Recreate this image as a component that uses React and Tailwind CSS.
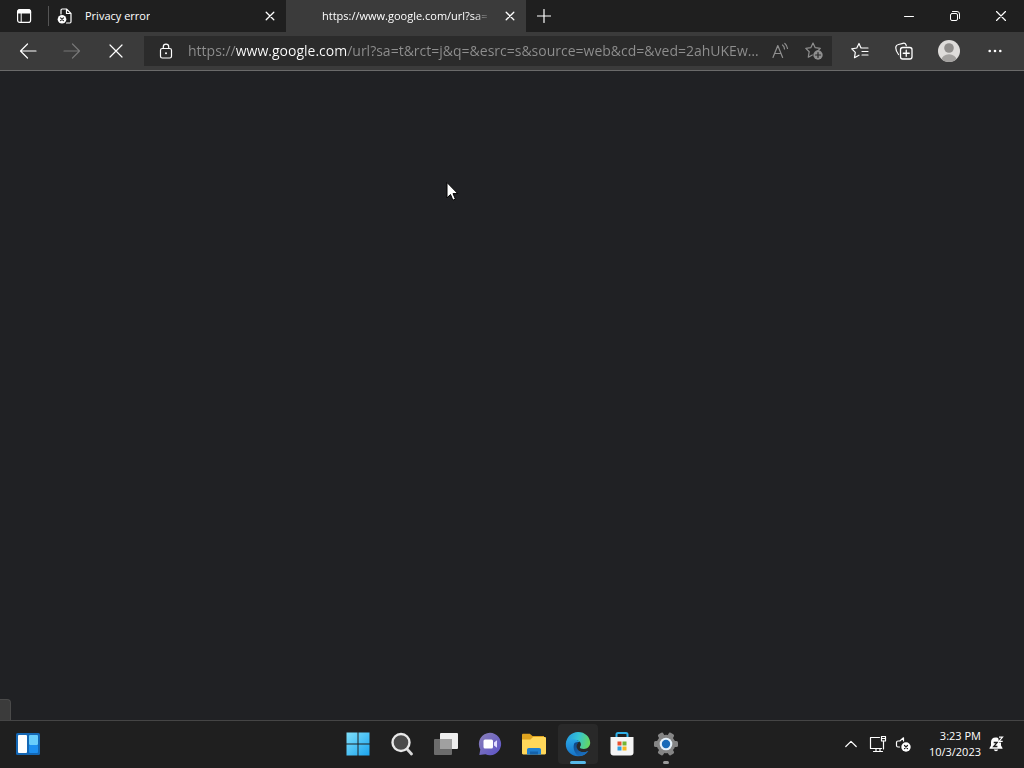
function Icon({ size = 16, children, className = '' }) {
    return (
        <svg
            width={size}
            height={size}
            viewBox={`0 0 ${size} ${size}`}
            fill="none"
            stroke="currentColor"
            strokeLinecap="round"
            strokeLinejoin="round"
            className={`shrink-0 ${className}`}
            aria-hidden="true"
        >
            {children}
        </svg>
    );
}

function CloseIcon() {
    return (
        <Icon size={10}>
            <path d="M1.200 1.200l7.600 7.600M8.800 1.200l-7.600 7.600" strokeWidth="1.300" />
        </Icon>
    );
}

function ErrorPageIcon() {
    return (
        <Icon>
            <path d="M4 6V2.200C4 1.300 4.500 1 5.200 1H9.500l4.500 4.500v8.300c0 .8-.4 1.200-1.200 1.200H9.500M9.500 1v4.500H14" strokeWidth="1.200" />
            <circle cx="5" cy="11.200" r="4.300" fill="currentColor" stroke="none" />
            <path d="M3.600 9.800l2.800 2.800M6.400 9.800l-2.800 2.800" stroke="#1f1f1f" strokeWidth="1.200" />
        </Icon>
    );
}

function TitleBar() {
    return (
        <header className="flex h-8 items-stretch bg-[#1f1f1f] text-white">
            <button aria-label="Tab actions" className="flex w-12 items-center justify-center">
                <Icon>
                    <rect x="1.600" y="1.600" width="13" height="12.800" rx="2.200" strokeWidth="1.200" />
                    <path d="M1.600 3.800c0-1.400.8-2.200 2.200-2.200h8.600c1.400 0 2.200.8 2.200 2.200v1.200h-13z" fill="currentColor" strokeWidth="1" />
                    <path d="M5.200 5v9.400" strokeWidth="1" />
                </Icon>
            </button>
            <nav aria-label="Tabs" className="flex min-w-0">
                <div className="flex w-[238px] min-w-0 items-center">
                    <span className="h-5 w-px shrink-0 bg-[#555555]" />
                    <button className="flex h-full min-w-0 flex-1 items-center gap-3 pl-2 text-left text-[11px]">
                        <ErrorPageIcon />
                        <span className="truncate">Privacy error</span>
                    </button>
                    <button aria-label="Close tab" className="flex h-full w-8 items-center justify-center">
                        <CloseIcon />
                    </button>
                </div>
                <div className="flex w-60 min-w-0 items-center bg-[#3b3b3b]">
                    <button className="h-full min-w-0 flex-1 pl-9 text-left text-[11px]">
                        <span className="block whitespace-nowrap mask-r-from-88% mask-r-to-100%">
                            https://www.google.com/url?sa=
                        </span>
                    </button>
                    <button aria-label="Close tab" className="flex h-full w-8 items-center justify-center">
                        <CloseIcon />
                    </button>
                </div>
            </nav>
            <button aria-label="New tab" className="flex w-9 items-center justify-center">
                <Icon size={14}>
                    <path d="M7 .5v13M.5 7h13" strokeWidth="1.200" />
                </Icon>
            </button>
            <div className="ml-auto flex">
                <button aria-label="Minimize" className="flex w-[46px] items-center justify-center">
                    <Icon size={10}>
                        <path d="M.5 5.500h9" />
                    </Icon>
                </button>
                <button aria-label="Restore" className="flex w-[46px] items-center justify-center">
                    <Icon size={10}>
                        <rect x=".5" y="2.500" width="7" height="7" rx="1.500" />
                        <path d="M2.500.5H7A2.500 2.500 0 0 1 9.500 3v4.500" />
                    </Icon>
                </button>
                <button aria-label="Close" className="flex w-[46px] items-center justify-center">
                    <Icon size={10}>
                        <path d="M.5.500l9 9M9.500.500l-9 9" strokeWidth="1.200" />
                    </Icon>
                </button>
            </div>
        </header>
    );
}

function ToolButton({ label, className = 'w-11', children, ...rest }) {
    return (
        <button aria-label={label} className={`flex items-center justify-center ${className}`} {...rest}>
            {children}
        </button>
    );
}

function Toolbar() {
    return (
        <div className="flex h-[39px] items-stretch border-b border-[#6a6a6a] bg-[#3b3b3b] px-[6px] text-white">
            <ToolButton label="Back">
                <Icon size={18}>
                    <path d="M17 9H1.500M8.500 2L1.500 9l7 7" strokeWidth="1.200" />
                </Icon>
            </ToolButton>
            <ToolButton label="Forward" className="w-11 text-[#777777]" disabled>
                <Icon size={18}>
                    <path d="M1 9h15.500M9.500 2l7 7-7 7" strokeWidth="1.200" />
                </Icon>
            </ToolButton>
            <ToolButton label="Stop loading">
                <Icon size={14}>
                    <path d="M1 1l12 12M13 1L1 13" strokeWidth="1.200" />
                </Icon>
            </ToolButton>

            <div className="my-1 mx-[6px] flex min-w-0 flex-1 items-stretch bg-[#2b2b2b]">
                <ToolButton label="View site information">
                    <Icon>
                        <rect x="2.500" y="5.500" width="11" height="9.500" rx="1.800" strokeWidth="1.200" />
                        <path d="M5.300 5.500V3.800a2.700 2.700 0 0 1 5.400 0v1.700" strokeWidth="1.200" />
                        <circle cx="8" cy="10.200" r="1" fill="currentColor" stroke="none" />
                    </Icon>
                </ToolButton>
                <input
                    type="text"
                    aria-label="Address and search bar"
                    defaultValue="https://www.google.com/url?sa=t&rct=j&q=&esrc=s&source=web&cd=&ved=2ahUKEwGmMpGh"
                    className="min-w-0 flex-1 overflow-hidden bg-[linear-gradient(90deg,#8f8f8f_48px,#ffffff_48px,#ffffff_159px,#8f8f8f_159px)] bg-clip-text text-sm text-ellipsis text-transparent caret-white outline-none"
                />
                <div className="flex text-[#8f8f8f]">
                    <ToolButton label="Read aloud" className="w-8">
                        <Icon size={18}>
                            <path d="M2 15.500L6.800 3.500l4.800 12M3.700 11.500h6.200M11.500 3a5 5 0 0 1 2 4M13.800 1.500a7.500 7.500 0 0 1 2.700 5" strokeWidth="1.200" />
                        </Icon>
                    </ToolButton>
                    <ToolButton label="Add this page to favorites" className="w-9">
                        <Icon size={18}>
                            <path d="M8 1l2.200 4.700 5.100.7-3.400 3.300M7.300 13l-4 2.200.9-5.500L.8 6.400l5-.7L8 1" strokeWidth="1.200" />
                            <circle cx="13" cy="13" r="4.700" fill="currentColor" stroke="none" />
                            <path d="M13 10.500v5M10.500 13h5" stroke="#2b2b2b" strokeWidth="1.200" />
                        </Icon>
                    </ToolButton>
                </div>
            </div>

            <ToolButton label="Favorites">
                <Icon size={18}>
                    <path d="M10.500 6H17M11 9.500h6M11 13h6M8 13.200l-4.500 2.500.8-5.300L.8 6.800l5-.8L8 1.500l2 4.500" strokeWidth="1.200" />
                </Icon>
            </ToolButton>
            <ToolButton label="Collections">
                <Icon size={18}>
                    <path d="M3.500 12.500C1.500 10 .5 6.500 1 4.500c.3-1.300 1.300-1.700 2.500-2L8 1.300c1.500-.3 2.500.2 3 1.500l.3 1" strokeWidth="1.200" />
                    <rect x="5.500" y="5.500" width="11.500" height="11.500" rx="2.200" strokeWidth="1.300" />
                    <path d="M11.250 8.250v6M8.250 11.250h6" strokeWidth="1.300" />
                </Icon>
            </ToolButton>
            <ToolButton label="Profile" className="w-[46px]">
                <svg width="22" height="22" viewBox="0 0 22 22" aria-hidden="true">
                    <clipPath id="avatar">
                        <circle cx="11" cy="11" r="11" />
                    </clipPath>
                    <g clipPath="url(#avatar)">
                        <rect width="22" height="22" fill="#dedcda" />
                        <circle cx="11" cy="8" r="4.800" fill="#8f8d8b" />
                        <ellipse cx="11" cy="20" rx="7.500" ry="5.800" fill="#a3a19f" />
                    </g>
                </svg>
            </ToolButton>
            <ToolButton label="Settings and more" className="w-[46px]">
                <Icon size={14}>
                    <g fill="currentColor" stroke="none">
                        <circle cx="1.700" cy="7" r="1.300" />
                        <circle cx="7" cy="7" r="1.300" />
                        <circle cx="12.300" cy="7" r="1.300" />
                    </g>
                </Icon>
            </ToolButton>
        </div>
    );
}

const apps = [
    {
        name: 'Start',
        icon: (
            <svg width="24" height="24" viewBox="0 0 24 24">
                <linearGradient id="start" x1="0" y1="0" x2="1" y2="1">
                    <stop offset="0" stopColor="#7fe0fb" />
                    <stop offset="1" stopColor="#1ba4ee" />
                </linearGradient>
                <path fill="url(#start)" d="M.5.500h11v11H.5zM12.500.500h11v11h-11zM.5 12.500h11v11H.5zM12.500 12.500h11v11h-11z" />
            </svg>
        )
    },
    {
        name: 'Search',
        icon: (
            <svg width="24" height="24" viewBox="0 0 24 24">
                <path d="M17 17l4.500 5" stroke="#d8d8d8" strokeWidth="2.800" strokeLinecap="round" />
                <circle cx="11" cy="10.500" r="8.500" fill="#4a4a4a" stroke="#e8e8e8" strokeWidth="2.400" />
            </svg>
        )
    },
    {
        name: 'Task View',
        icon: (
            <svg width="24" height="24" viewBox="0 0 24 24">
                <rect x="6" y="1" width="18" height="16" rx="1" fill="#eeeeee" />
                <rect x="0" y="7" width="18" height="16" rx="1" fill="#6c6c6c" />
                <rect x="6" y="7" width="12" height="10" fill="#a0a0a0" />
            </svg>
        )
    },
    {
        name: 'Chat',
        icon: (
            <svg width="24" height="24" viewBox="0 0 24 24">
                <linearGradient id="chat" x1="0" y1="0" x2="1" y2="1">
                    <stop offset="0" stopColor="#8a80b8" />
                    <stop offset="1" stopColor="#5b52c8" />
                </linearGradient>
                <path d="M12 .8A11.200 11.200 0 1 1 7.500 22.300L1.300 23l1-5.500A11.200 11.200 0 0 1 12 .8z" fill="url(#chat)" />
                <rect x="5.500" y="7.500" width="9.500" height="9" rx="1.500" fill="#ffffff" />
                <path d="M16 10.500l3-2.300v7.600l-3-2.300z" fill="#e2dfff" />
            </svg>
        )
    },
    {
        name: 'File Explorer',
        icon: (
            <svg width="26" height="24" viewBox="0 0 26 24">
                <path d="M1 3c0-.8.500-1.300 1.300-1.300h6.500L11.500 4H23v7H1z" fill="#dfa31f" />
                <path d="M1 7.500h8.500L12 5h11.700c.8 0 1.300.5 1.300 1.300v15c0 .7-.5 1.200-1.200 1.200H2.200c-.7 0-1.200-.5-1.200-1.200z" fill="#ffd75a" />
                <path d="M6 22.500V17.800c0-1.100.7-1.800 1.800-1.800h10.400c1.100 0 1.800.7 1.800 1.800v4.700z" fill="#1f7fd0" />
                <path d="M9 22.500v-3h8v3z" fill="#1462ab" />
            </svg>
        )
    },
    {
        name: 'Microsoft Edge',
        active: true,
        icon: (
            <svg width="26" height="26" viewBox="0 0 26 26">
                <linearGradient id="edgeTop" x1="0" y1=".3" x2="1" y2=".5">
                    <stop offset="0" stopColor="#2398e2" />
                    <stop offset=".5" stopColor="#35c4d2" />
                    <stop offset="1" stopColor="#65d95f" />
                </linearGradient>
                <linearGradient id="edgeBase" x1="0" y1="0" x2="0" y2="1">
                    <stop offset="0" stopColor="#2aa5e5" />
                    <stop offset="1" stopColor="#1673c8" />
                </linearGradient>
                <linearGradient id="edgeWave" x1="0" y1="0" x2=".6" y2="1">
                    <stop offset="0" stopColor="#0f4480" />
                    <stop offset="1" stopColor="#1a70c0" />
                </linearGradient>
                <path d="M.8 12.500C1.500 6 6.500 1 13 1c7 0 12.200 5 12.200 10.800 0 3.700-2.900 6.200-6.300 6.200-2.600 0-4-.8-4-1.700 0-.7 1-1.200 1-3 0-2.300-2.100-4.100-5.200-4.100C6 9.200 2.300 11 .8 12.500z" fill="url(#edgeTop)" />
                <path d="M.8 13c.5-3.700 4-5.200 8-4.700 3.500.4 5.200 1.700 6.200 3-2.500-.8-4.500 1.200-4.500 3.700 0 4 4 6.500 8 6.300 2 0 3.700-.8 4.800-1.300C21 23.500 17.300 25.200 13 25.200 6 25.200.6 19.500.8 13z" fill="url(#edgeBase)" />
                <path d="M9.500 12c-1.800 3.300-1 9.500 4 13.100 4.300.1 7.800-2.100 9.800-5.100-4.200 2.300-8.500 1.200-10.600-1.500-1.700-2-1.700-5 .8-7-1.500-.6-3-.4-4 .5z" fill="url(#edgeWave)" />
            </svg>
        )
    },
    {
        name: 'Microsoft Store',
        icon: (
            <svg width="26" height="26" viewBox="0 0 26 26">
                <path d="M7.500 7V3.500C7.500 2.500 8 2 9 2h8c1 0 1.500.5 1.500 1.500V7" fill="none" stroke="#2fb0e8" strokeWidth="2" />
                <path d="M1.500 6h23v15.500c0 2-1 3-3 3h-17c-2 0-3-1-3-3z" fill="#f5f5f5" />
                <path d="M8.500 10.500h4v4h-4z" fill="#e8502e" />
                <path d="M13.500 10.500h4v4h-4z" fill="#72b532" />
                <path d="M8.500 15.500h4v4h-4z" fill="#2d9fe0" />
                <path d="M13.500 15.500h4v4h-4z" fill="#f5b81f" />
            </svg>
        )
    },
    {
        name: 'Settings',
        running: true,
        icon: (
            <svg width="26" height="26" viewBox="0 0 26 26">
                <g fill="#858585">
                    <circle cx="13" cy="13" r="9.300" />
                    <rect x="10" y="1" width="6" height="24" rx="1.500" transform="rotate(30 13 13)" />
                    <rect x="10" y="1" width="6" height="24" rx="1.500" transform="rotate(90 13 13)" />
                    <rect x="10" y="1" width="6" height="24" rx="1.500" transform="rotate(150 13 13)" />
                </g>
                <circle cx="13" cy="13" r="6.300" fill="#e6f1fa" />
                <circle cx="13" cy="13" r="4.200" fill="#1869b8" />
            </svg>
        )
    }
];

function Taskbar() {
    return (
        <footer className="grid h-12 grid-cols-[1fr_auto_1fr] items-stretch border-t border-[#454545] bg-[#1f1f1f] pb-px text-white">
            <button aria-label="Widgets" className="flex w-14 items-center justify-center">
                <svg width="24" height="22" viewBox="0 0 24 22" aria-hidden="true">
                    <rect width="24" height="22" rx="1.500" fill="#1467b4" />
                    <rect x="2" y="2" width="9" height="18" rx="1" fill="#ffffff" />
                    <rect x="13" y="2" width="9" height="10" rx="1" fill="#69cdfb" />
                    <rect x="13" y="12" width="9" height="8" rx="1" fill="#1d8ff0" />
                </svg>
            </button>

            <nav aria-label="Apps" className="flex items-center">
                {apps.map((app) => (
                    <div key={app.name} className="flex w-11 justify-center">
                        <button
                            aria-label={app.name}
                            className={`relative flex size-10 items-center justify-center rounded ${app.active ? 'bg-[#292929]' : ''}`}
                        >
                            {app.icon}
                            {app.active && <span className="absolute bottom-0 h-[3px] w-4 rounded-full bg-[#55b8e8]" />}
                            {app.running && <span className="absolute bottom-0 h-[3px] w-[6px] rounded-full bg-[#9a9a9a]" />}
                        </button>
                    </div>
                ))}
            </nav>

            <div className="flex items-center justify-end pr-5">
                <button aria-label="Show hidden icons" className="flex h-full w-7 items-center justify-center">
                    <Icon size={12}>
                        <path d="M.8 8.500L6 3.300l5.200 5.200" strokeWidth="1.200" />
                    </Icon>
                </button>
                <button aria-label="Network and volume" className="flex h-full items-center gap-2 px-1">
                    <Icon size={18}>
                        <path d="M10.500 2.500H1.500v11h11M4.500 16.500h9M7 13.500v3M11 13.500v3" strokeWidth="1.200" />
                        <rect x="12.500" y="1.500" width="4" height="4.500" strokeWidth="1.200" />
                        <path d="M12.500 3.500h4M14.500 6v8" strokeWidth="1.200" />
                    </Icon>
                    <Icon>
                        <path d="M8.500 5V1.800L4.800 5H3C2 5 1.500 5.500 1.500 6.500v3C1.500 10.500 2 11 3 11h1.500" strokeWidth="1.200" />
                        <circle cx="11" cy="11" r="4.700" fill="currentColor" stroke="none" />
                        <path d="M9.500 9.500l3 3M12.500 9.500l-3 3" stroke="#1f1f1f" strokeWidth="1.200" />
                    </Icon>
                </button>
                <button className="flex h-full items-center gap-2 pl-[14px] text-right text-[11px] leading-4">
                    <span>
                        <span className="block">3:23 PM</span>
                        <span className="block">10/3/2023</span>
                    </span>
                    <svg width="15" height="16" viewBox="0 0 15 16" role="img" aria-label="Notifications snoozed">
                        <path d="M6.500 1.500C3.700 1.500 2 3.500 2 6v3.500L.5 12v.8h13V12L12 9.500V6C12 3 9.500 1.500 6.500 1.500zM4.800 13.600a2.300 2.300 0 0 0 4.400 0z" fill="#ffffff" />
                        <path d="M4.700 6.500h3.500l-3.500 4h3.700" fill="none" stroke="#1f1f1f" strokeWidth="1.300" />
                        <path d="M9 0h6v6.500h-5z" fill="#1f1f1f" />
                        <path d="M10 1.200h3.500L10 5.400h3.700" fill="none" stroke="#ffffff" strokeWidth="1.200" />
                    </svg>
                </button>
            </div>
        </footer>
    );
}

export default function App() {
    return (
        <div className="relative flex min-h-screen flex-col bg-[#202124] font-['Open_Sans','Noto_Sans',sans-serif]">
            <TitleBar />
            <Toolbar />
            <main className="flex flex-1 items-end">
                {/* Link status bubble */}
                <div className="h-[21px] w-[11px] rounded-tr-sm border-t border-r border-[#4a4a4a] bg-[#3b3b3b]" />
            </main>
            <Taskbar />

            {/* Mouse pointer */}
            <svg className="pointer-events-none absolute top-[181px] left-[446px]" width="13" height="21" viewBox="0 0 13 21" aria-hidden="true">
                <path d="M1 1.500v15.300l3.500-3.300 2.400 5.700 2.500-1.100-2.400-5.500h4.800z" fill="#ffffff" stroke="#000000" strokeWidth="1" />
            </svg>
        </div>
    );
}
